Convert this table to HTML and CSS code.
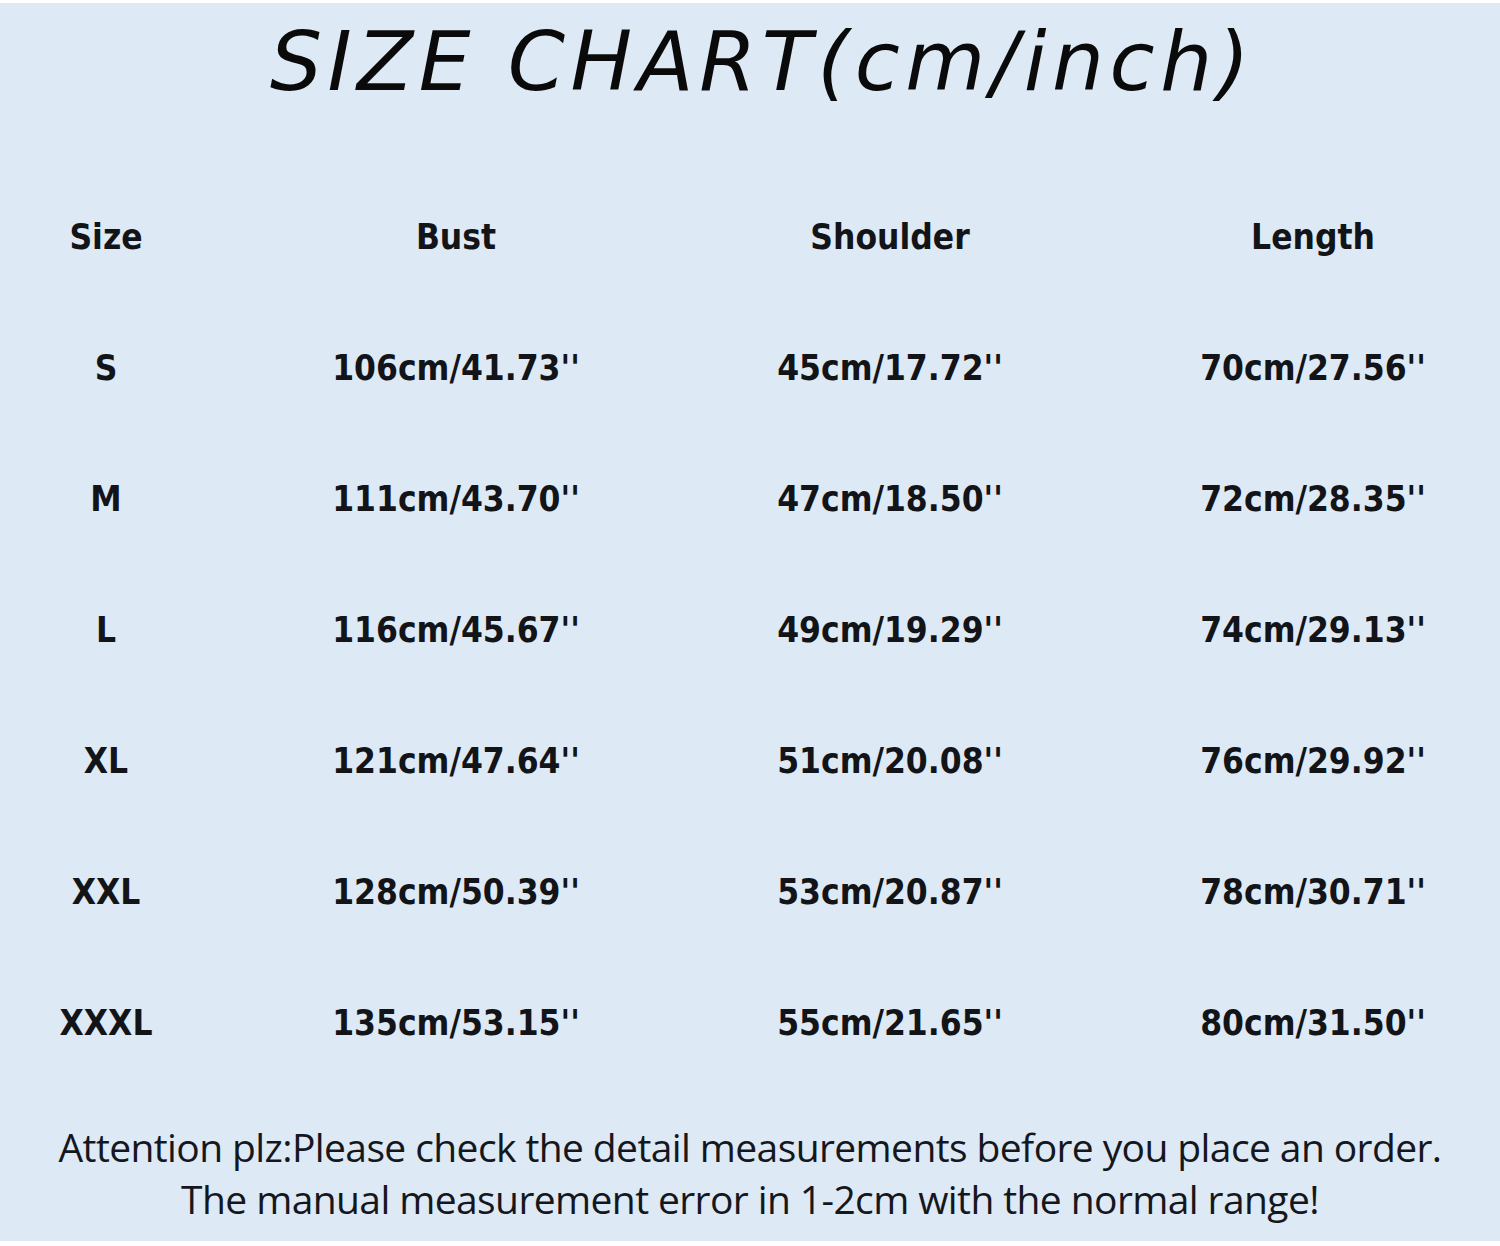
FILE: index.html
```html
<!DOCTYPE html>
<html>
<head>
<meta charset="utf-8">
<link rel="stylesheet" href="styles.css">
</head>
<body>
<div class="sheet">
  <div class="panel">
    <h1 class="title">SIZE CHART(cm/inch)</h1>
    <div class="chart">
      <div class="cell head">Size</div><div class="cell head">Bust</div><div class="cell head">Shoulder</div><div class="cell head last">Length</div>
      <div class="cell">S</div><div class="cell">106cm/41.73''</div><div class="cell">45cm/17.72''</div><div class="cell last">70cm/27.56''</div>
      <div class="cell">M</div><div class="cell">111cm/43.70''</div><div class="cell">47cm/18.50''</div><div class="cell last">72cm/28.35''</div>
      <div class="cell">L</div><div class="cell">116cm/45.67''</div><div class="cell">49cm/19.29''</div><div class="cell last">74cm/29.13''</div>
      <div class="cell">XL</div><div class="cell">121cm/47.64''</div><div class="cell">51cm/20.08''</div><div class="cell last">76cm/29.92''</div>
      <div class="cell">XXL</div><div class="cell">128cm/50.39''</div><div class="cell">53cm/20.87''</div><div class="cell last">78cm/30.71''</div>
      <div class="cell">XXXL</div><div class="cell">135cm/53.15''</div><div class="cell">55cm/21.65''</div><div class="cell last">80cm/31.50''</div>
    </div>
    <div class="note">
      <p>Attention plz:Please check the detail measurements before you place an order.</p>
      <p>The manual measurement error in 1-2cm with the normal range!</p>
    </div>
  </div>
</div>
</body>
</html>
```
FILE: styles.css
```css
html, body {
  margin: 0;
  padding: 0;
  background: #ffffff;
}
.sheet {
  width: 1500px;
  height: 1246px;
  padding-top: 3px;
  box-sizing: border-box;
  background: #ffffff;
}
.panel {
  height: 1238px;
  background: #dde9f5;
  display: flex;
  flex-direction: column;
}
.title {
  margin: 0;
  height: 168px;
  box-sizing: border-box;
  padding-top: 0;
  padding-left: 25px;
  text-align: center;
  font-family: "DejaVu Sans", sans-serif;
  font-style: oblique;
  font-weight: 400;
  font-size: 82px;
  line-height: 118px;
  color: #0a0a0a;
  letter-spacing: 5.5px;
}
.chart {
  display: grid;
  grid-template-columns: 212px 488px 380px 420px;
  grid-auto-rows: 131px;
  align-items: center;
  font-family: "DejaVu Sans Condensed", "DejaVu Sans", sans-serif;
  font-weight: 700;
  font-size: 35px;
  color: #121418;
}
.cell {
  text-align: center;
  white-space: nowrap;
}
.cell.last {
  padding-left: 46px;
}
.note {
  margin-top: 33px;
  font-family: "Open Sans", sans-serif;
  font-size: 39px;
  line-height: 52px;
  color: #15171c;
  text-align: center;
  letter-spacing: -0.6px;
}
.note p {
  margin: 0;
  white-space: nowrap;
}
```
